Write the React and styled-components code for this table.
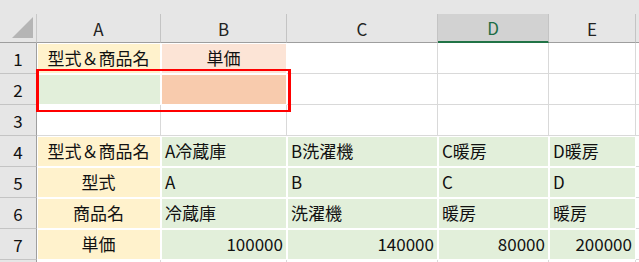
import React from "react";
import styled, { createGlobalStyle, css } from "styled-components";

const GlobalStyle = createGlobalStyle`
  html, body { margin: 0; padding: 0; background: #fff; }
  body { font-family: "Noto Sans CJK JP", "Noto Sans", sans-serif; }
`;

const FILLS = {
  yellow: "#fff2cc",
  peach: "#fce4d6",
  green: "#e2efda",
  salmon: "#f8cbad",
};

const COLUMNS = [
  { key: "A", width: 124 },
  { key: "B", width: 126 },
  { key: "C", width: 151 },
  { key: "D", width: 111, selected: true },
  { key: "E", width: 87 },
];

const c = (text, fill, align = "left") => ({ text, fill, align });

const ROWS = [
  [c("型式＆商品名", "yellow", "center"), c("単価", "peach", "center"), c(), c(), c()],
  [c("", "green"), c("", "salmon"), c(), c(), c()],
  [c(), c(), c(), c(), c()],
  [
    c("型式＆商品名", "yellow", "center"),
    c("A冷蔵庫", "green"),
    c("B洗濯機", "green"),
    c("C暖房", "green"),
    c("D暖房", "green"),
  ],
  [c("型式", "yellow", "center"), c("A", "green"), c("B", "green"), c("C", "green"), c("D", "green")],
  [
    c("商品名", "yellow", "center"),
    c("冷蔵庫", "green"),
    c("洗濯機", "green"),
    c("暖房", "green"),
    c("暖房", "green"),
  ],
  [
    c("単価", "yellow", "center"),
    c("100000", "green", "right"),
    c("140000", "green", "right"),
    c("80000", "green", "right"),
    c("200000", "green", "right"),
  ],
];

const Page = styled.div`
  position: relative;
  width: 639px;
  height: 262px;
  overflow: hidden;
  display: flex;
  flex-direction: column;
  background: #fff;
`;

const TopBand = styled.div`
  height: 14px;
  flex: none;
  background: #e6e6e6;
`;

const Sheet = styled.div`
  display: grid;
  grid-template-columns: 37px ${COLUMNS.map((col) => `${col.width}px`).join(" ")} 1fr;
  grid-template-rows: 29px repeat(${ROWS.length}, 31px) 31px;
  flex: none;
`;

const Corner = styled.div`
  box-sizing: border-box;
  background: #e6e6e6;
  border-right: 1px solid #c8c8c8;
  border-bottom: 1px solid #9e9e9e;
  display: flex;
  align-items: flex-end;
  justify-content: flex-end;
  padding: 0 3px 4px 0;
`;

const ColHeader = styled.div`
  box-sizing: border-box;
  background: #e6e6e6;
  border-right: 1px solid #c4c4c4;
  border-bottom: 1px solid #9e9e9e;
  display: flex;
  align-items: center;
  justify-content: center;
  font-size: 17px;
  color: #222;
  ${(p) =>
    p.$selected &&
    css`
      background: #d2d2d2;
      color: #1d6d45;
      border-bottom: 2px solid #217346;
    `}
  ${(p) =>
    p.$filler &&
    css`
      border-right: none;
    `}
`;

const RowHeader = styled.div`
  box-sizing: border-box;
  background: #e6e6e6;
  border-right: 1px solid #9e9e9e;
  border-bottom: 1px solid #c4c4c4;
  display: flex;
  align-items: center;
  justify-content: center;
  font-size: 17px;
  color: #111;
`;

const Cell = styled.div`
  box-sizing: border-box;
  border-right: 1px solid #d9d9d9;
  border-bottom: 1px solid #d9d9d9;
  font-size: 17px;
  line-height: 30px;
  color: #111;
  white-space: nowrap;
  overflow: hidden;
  padding: 0 3px 0 4px;
  text-align: ${(p) => p.$align};
  background: ${(p) => (p.$fill ? FILLS[p.$fill] : "#fff")};
  ${(p) =>
    p.$fill &&
    css`
      border-right-color: #fff;
      border-bottom-color: #fff;
      box-shadow: inset 1px 1px 0 #fff;
    `}
  ${(p) =>
    p.$align === "center" &&
    css`
      padding: 0;
    `}
  ${(p) =>
    p.$filler &&
    css`
      border-right: none;
    `}
`;

const Highlight = styled.div`
  position: absolute;
  left: 36px;
  top: 69px;
  width: 255px;
  height: 43px;
  box-sizing: border-box;
  border: solid #ff0000;
  border-width: 2px 3px;
  pointer-events: none;
`;

function SelectAll() {
  return (
    <svg width="21" height="21" viewBox="0 0 21 21">
      <polygon points="21,0 21,21 0,21" fill="#b5b5b5" />
    </svg>
  );
}

function SheetRow({ label, cells }) {
  return (
    <>
      <RowHeader>{label}</RowHeader>
      {cells.map((cell, i) => (
        <Cell key={i} $fill={cell.fill} $align={cell.align}>
          {cell.text}
        </Cell>
      ))}
      <Cell $align="left" $filler />
    </>
  );
}

export default function App() {
  const blank = COLUMNS.map(() => c());
  return (
    <>
      <GlobalStyle />
      <Page>
        <TopBand />
        <Sheet>
          <Corner>
            <SelectAll />
          </Corner>
          {COLUMNS.map((col) => (
            <ColHeader key={col.key} $selected={col.selected}>
              {col.key}
            </ColHeader>
          ))}
          <ColHeader $filler />
          {ROWS.map((row, r) => (
            <SheetRow key={r} label={r + 1} cells={row} />
          ))}
          {/* next row only peeks in at the bottom edge */}
          <SheetRow label="" cells={blank} />
        </Sheet>
        <Highlight />
      </Page>
    </>
  );
}
